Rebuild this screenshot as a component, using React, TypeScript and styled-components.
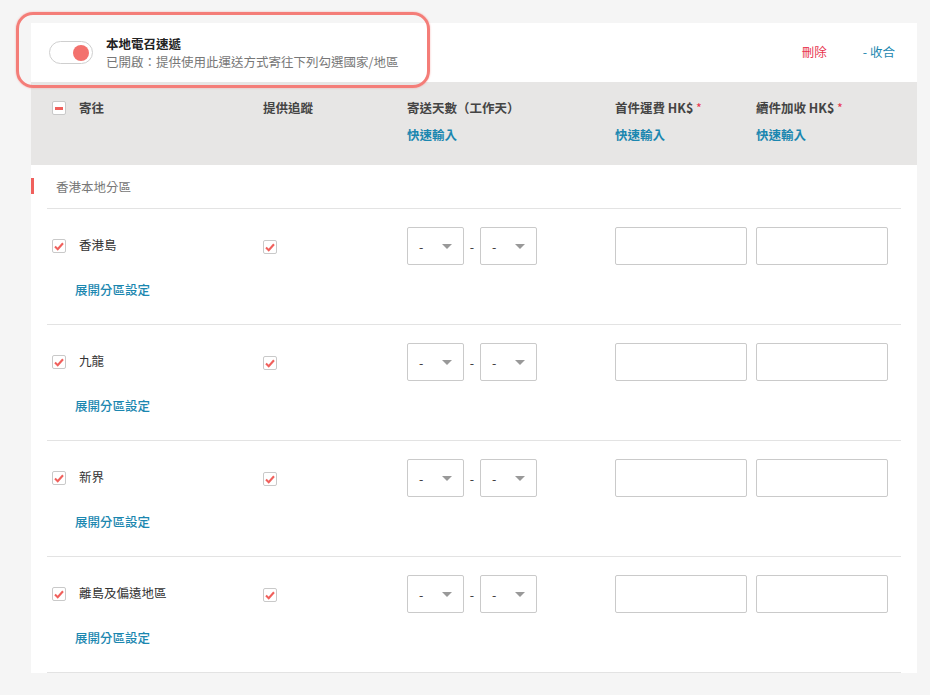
import { FC } from "react";
import styled, { createGlobalStyle } from "styled-components";

const columns = "211px 144px 208px 141px 1fr";

const regions = ["香港島", "九龍", "新界", "離島及偏遠地區"];

const GlobalStyle = createGlobalStyle`
  html, body {
    margin: 0;
    padding: 0;
    background: #f5f5f5;
  }
  body {
    font-family: "Noto Sans CJK TC", "Noto Sans", "Liberation Sans", sans-serif;
    font-size: 12.5px;
    color: #333;
  }
`;

const CheckMark: FC = () => (
  <svg width="10" height="9" viewBox="0 0 10 9">
    <path d="M1 4.6 L3.7 7.2 L9 1.2" fill="none" stroke="#f0605c" strokeWidth="2.1" />
  </svg>
);

const Checkbox: FC<{ partial?: boolean }> = ({ partial }) => (
  <Box>{partial ? <MinusBar /> : <CheckMark />}</Box>
);

const DaySelect: FC = () => (
  <Select>
    <span>-</span>
    <Caret />
  </Select>
);

const Required: FC<{ label: string }> = ({ label }) => (
  <HeadLabel>
    {label} <Star>*</Star>
  </HeadLabel>
);

export default function App() {
  return (
    <Page>
      <GlobalStyle />
      <Card>
        <TopBar>
          <Toggle>
            <Knob />
          </Toggle>
          <TitleBlock>
            <Title>本地電召速遞</Title>
            <Subtitle>已開啟：提供使用此運送方式寄往下列勾選國家/地區</Subtitle>
          </TitleBlock>
          <Actions>
            <DeleteLink>刪除</DeleteLink>
            <CollapseLink>- 收合</CollapseLink>
          </Actions>
        </TopBar>

        <HeaderGrid>
          <NameCell>
            <Checkbox partial />
            <HeadLabel>寄往</HeadLabel>
          </NameCell>
          <HeadLabel>提供追蹤</HeadLabel>
          <HeadStack>
            <HeadLabel>寄送天數（工作天）</HeadLabel>
            <QuickLink>快速輸入</QuickLink>
          </HeadStack>
          <HeadStack>
            <Required label="首件運費 HK$" />
            <QuickLink>快速輸入</QuickLink>
          </HeadStack>
          <HeadStack>
            <Required label="續件加收 HK$" />
            <QuickLink>快速輸入</QuickLink>
          </HeadStack>
        </HeaderGrid>

        <SectionTitle>香港本地分區</SectionTitle>

        <Rows>
          {regions.map((region) => (
            <Row key={region}>
              <RowGrid>
                <NameCell>
                  <Checkbox />
                  <RegionName>{region}</RegionName>
                </NameCell>
                <div>
                  <Checkbox />
                </div>
                <DayRange>
                  <DaySelect />
                  <Dash>-</Dash>
                  <DaySelect />
                </DayRange>
                <TextInput />
                <TextInput />
              </RowGrid>
              <ExpandLink>展開分區設定</ExpandLink>
            </Row>
          ))}
        </Rows>
      </Card>
      <Highlight />
    </Page>
  );
}

const Page = styled.div`
  position: relative;
  padding: 23px 13px 23px 31px;
`;

const Card = styled.div`
  background: #fff;
  width: 886px;
`;

const Highlight = styled.div`
  position: absolute;
  left: 16px;
  top: 12px;
  width: 408px;
  height: 70px;
  border: 3px solid #f47d78;
  border-radius: 17px;
  box-shadow: 0 0 2px rgba(244, 125, 120, 0.6);
  pointer-events: none;
`;

const TopBar = styled.div`
  display: flex;
  align-items: center;
  height: 59px;
  padding: 0 22px 0 18px;
`;

const Toggle = styled.div`
  box-sizing: border-box;
  width: 44px;
  height: 23px;
  border: 1px solid #cfcfcf;
  border-radius: 12px;
  background: #fff;
  display: flex;
  align-items: center;
  justify-content: flex-end;
  padding-right: 3px;
`;

const Knob = styled.div`
  width: 16px;
  height: 16px;
  border-radius: 50%;
  background: #f3716d;
`;

const TitleBlock = styled.div`
  display: flex;
  flex-direction: column;
  margin-left: 13px;
`;

const Title = styled.div`
  font-weight: 700;
  line-height: 18px;
  color: #222;
`;

const Subtitle = styled.div`
  line-height: 18px;
  color: #777;
`;

const Actions = styled.div`
  margin-left: auto;
  display: flex;
  gap: 36px;
  margin-top: -2px;
`;

const DeleteLink = styled.span`
  color: #e8344f;
`;

const CollapseLink = styled.span`
  color: #1b87b0;
`;

const HeaderGrid = styled.div`
  display: grid;
  grid-template-columns: ${columns};
  align-items: start;
  background: #e7e6e5;
  height: 83px;
  box-sizing: border-box;
  padding: 17px 0 0 21px;
`;

const HeadStack = styled.div`
  display: flex;
  flex-direction: column;
  gap: 9px;
`;

const HeadLabel = styled.span`
  font-weight: 700;
  line-height: 18px;
  color: #444;
`;

const Star = styled.span`
  color: #e8344f;
  font-weight: 400;
`;

const QuickLink = styled.span`
  font-weight: 700;
  line-height: 18px;
  color: #1b87b0;
`;

const NameCell = styled.div`
  display: flex;
  align-items: center;
  gap: 13px;
`;

const Box = styled.span`
  box-sizing: border-box;
  width: 14px;
  height: 14px;
  border: 1px solid #c9c9c9;
  border-radius: 2px;
  background: #fff;
  display: inline-flex;
  align-items: center;
  justify-content: center;
  flex-shrink: 0;
`;

const MinusBar = styled.span`
  width: 8px;
  height: 3px;
  background: #f0605c;
`;

const SectionTitle = styled.div`
  position: relative;
  height: 43px;
  display: flex;
  align-items: center;
  padding-left: 25px;
  color: #777;
  line-height: 16px;

  &::before {
    content: "";
    position: absolute;
    left: 0;
    top: 13px;
    width: 3px;
    height: 16px;
    background: #f0605c;
  }
`;

const Rows = styled.div`
  margin: 0 16px;
`;

const Row = styled.div`
  border-top: 1px solid #e3e3e3;
  padding: 18px 0 25px 5px;

  &:last-child {
    border-bottom: 1px solid #e3e3e3;
  }
`;

const RowGrid = styled.div`
  display: grid;
  grid-template-columns: ${columns};
  align-items: center;
  height: 38px;
`;

const RegionName = styled.span`
  color: #333;
  margin-top: -3px;
`;

const DayRange = styled.div`
  display: flex;
  align-items: center;
`;

const Dash = styled.span`
  width: 16px;
  text-align: center;
  color: #333;
`;

const Select = styled.div`
  box-sizing: border-box;
  width: 57px;
  height: 38px;
  border: 1px solid #cacaca;
  border-radius: 2px;
  display: flex;
  align-items: center;
  justify-content: space-between;
  padding: 0 11px 0 11px;
  color: #333;
`;

const Caret = styled.span`
  width: 0;
  height: 0;
  border-left: 5px solid transparent;
  border-right: 5px solid transparent;
  border-top: 5px solid #999;
`;

const TextInput = styled.div`
  box-sizing: border-box;
  width: 132px;
  height: 38px;
  border: 1px solid #cacaca;
  border-radius: 2px;
  background: #fff;
`;

const ExpandLink = styled.div`
  margin: 16px 0 0 23px;
  line-height: 18px;
  font-weight: 500;
  color: #1b87b0;
`;
